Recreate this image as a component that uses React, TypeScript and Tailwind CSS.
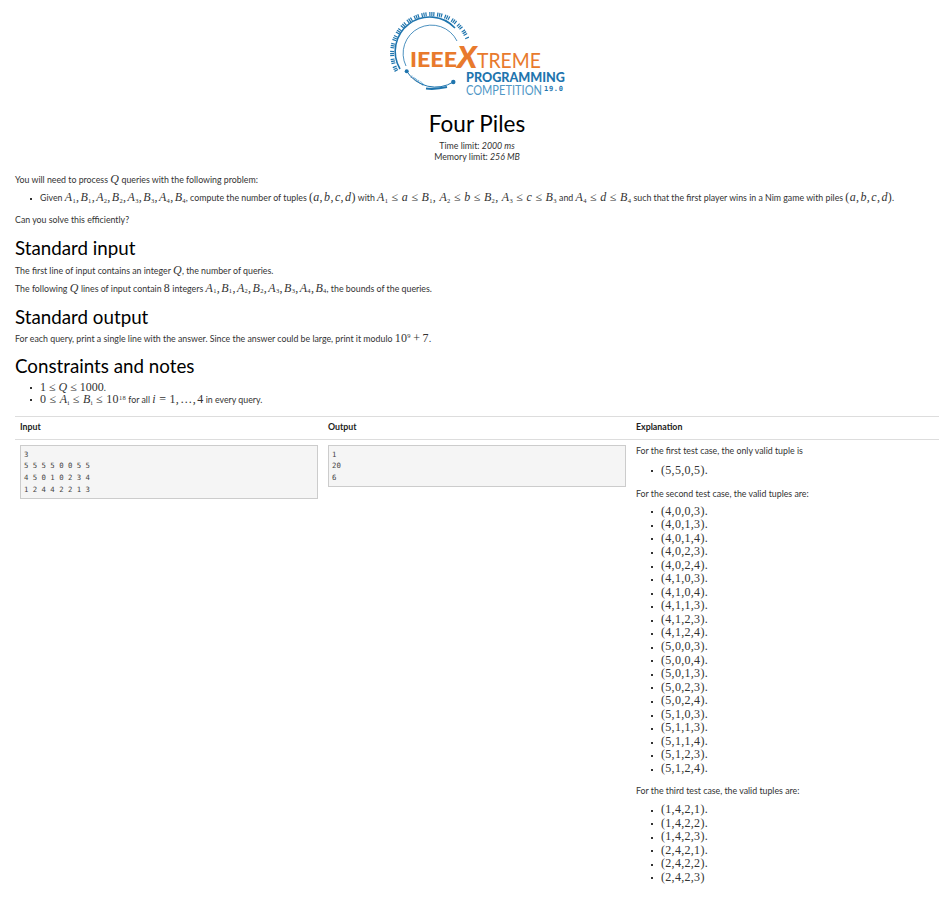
const serif = "font-['Liberation_Serif',serif]";

function Logo() {
  return (
    <svg width="190" height="92" viewBox="0 0 190 92" className="block">
      <g fill="none" stroke="#1f75ae">
        <path d="M16.5 63 A39 39 0 1 1 87.5 31" strokeWidth="4" strokeDasharray="1.2 0.8 1.2 0.8 1.2 2.6" />
        <path d="M20 61 A34.5 34.5 0 0 1 75 20" strokeWidth="1.6" />
        <path d="M26 58 A28 28 0 0 1 77 33" strokeWidth="0.8" />
        <path d="M26.7 63.3 A34 34 0 0 0 73.3 74" strokeWidth="1" />
        <path d="M46 80.5 Q56 81.5 67 79" strokeWidth="2.2" />
      </g>
      <circle cx="26.7" cy="63.3" r="2" fill="#1f75ae" />
      <circle cx="73.3" cy="74" r="2.2" fill="#1f75ae" />
      <text x="0" y="0" fill="#1f75ae" fontFamily="Lato" fontWeight="700" fontSize="3.2" transform="translate(30 69) rotate(35)">5 MAR ON</text>
      <text x="30" y="59" fill="#e87a2d" fontFamily="Lato" fontWeight="900" fontSize="21" textLength="47" lengthAdjust="spacingAndGlyphs">IEEE</text>
      <text x="77" y="60" fill="#e87a2d" fontFamily="Lato" fontWeight="900" fontStyle="italic" fontSize="30" textLength="20" lengthAdjust="spacingAndGlyphs">X</text>
      <text x="97" y="60" fill="#e87a2d" fontFamily="Lato" fontWeight="400" fontSize="22" textLength="64" lengthAdjust="spacingAndGlyphs">TREME</text>
      <text x="86" y="74" fill="#1f75ae" fontFamily="Lato" fontWeight="900" fontSize="12.5" textLength="99" lengthAdjust="spacingAndGlyphs">PROGRAMMING</text>
      <text x="86" y="87" fill="#4f97c6" fontFamily="Lato" fontWeight="400" fontSize="13.5" textLength="76" lengthAdjust="spacingAndGlyphs">COMPETITION</text>
      <text x="164" y="83" fill="#1f75ae" fontFamily="DejaVu Sans Mono" fontWeight="700" fontSize="7" textLength="19">19.0</text>
    </svg>
  );
}

function Sub({ v, n }: { v: string; n: string | number }) {
  return (
    <span className={serif}>
      <i>{v}</i>
      <sub className="text-[6.5px] leading-none">{n}</sub>
    </span>
  );
}

function M({ children }: { children: React.ReactNode }) {
  return <span className={`${serif} text-[12px] leading-none tracking-[0.3px]`}>{children}</span>;
}

function C() {
  return <span className="mr-[1.2px]">,</span>;
}

function Pairs() {
  return (
    <M>
      <Sub v="A" n={1} /><C /><Sub v="B" n={1} /><C /><Sub v="A" n={2} /><C /><Sub v="B" n={2} /><C /><Sub v="A" n={3} /><C /><Sub v="B" n={3} /><C /><Sub v="A" n={4} /><C /><Sub v="B" n={4} />
    </M>
  );
}

function Abcd() {
  return <M>(<i>a</i><C /><i>b</i><C /><i>c</i><C /><i>d</i>)</M>;
}

function Heading({ children }: { children: React.ReactNode }) {
  return <h2 className="text-[18.75px] leading-[24px] text-black">{children}</h2>;
}

function Bullet({ children, className = "" }: { children: React.ReactNode; className?: string }) {
  return (
    <li className={`relative ${className}`}>
      <span className="absolute -left-[10px] top-1/2 h-[2px] w-[2px] bg-[#333]" />
      {children}
    </li>
  );
}

const sampleInput = ["3", "5 5 5 5 0 0 5 5", "4 5 0 1 0 2 3 4", "1 2 4 4 2 2 1 3"];
const sampleOutput = ["1", "20", "6"];
const second = ["4,0,0,3", "4,0,1,3", "4,0,1,4", "4,0,2,3", "4,0,2,4", "4,1,0,3", "4,1,0,4", "4,1,1,3", "4,1,2,3", "4,1,2,4", "5,0,0,3", "5,0,0,4", "5,0,1,3", "5,0,2,3", "5,0,2,4", "5,1,0,3", "5,1,1,3", "5,1,1,4", "5,1,2,3", "5,1,2,4"];
const third = ["1,4,2,1", "1,4,2,2", "1,4,2,3", "2,4,2,1", "2,4,2,2", "2,4,2,3"];

function Tuples({ items, noEnd }: { items: string[]; noEnd?: boolean }) {
  return (
    <>
      {items.map((t, i) => (
        <Bullet key={t} className="h-[13.55px] leading-[13.55px]">
          <M>({t}){noEnd && i === items.length - 1 ? "" : "."}</M>
        </Bullet>
      ))}
    </>
  );
}

function CodeBox({ lines }: { lines: string[] }) {
  return (
    <pre className="border border-[#ccc] bg-[#f5f5f5] px-[3px] py-[2.5px] font-['DejaVu_Sans_Mono',monospace] text-[7.3px] leading-[11.7px] text-[#444]">
      {lines.join("\n")}
    </pre>
  );
}

export default function App() {
  return (
    <div className="min-h-[919px] bg-white pl-[15px] pr-[8px] font-['Lato',sans-serif] text-[8.8px] leading-[13px] text-[#333]">
      <header className="flex flex-col items-center pt-[8px]">
        <div className="-ml-[4px]">
          <Logo />
        </div>
        <h1 className="mt-[10px] text-[22.5px] leading-[28px] text-black">Four Piles</h1>
        <p className="mt-[1.5px] leading-[11px]">Time limit: <i>2000 ms</i></p>
        <p className="leading-[11px]">Memory limit: <i>256 MB</i></p>
      </header>

      <p className="mt-[11px] h-[13px]">You will need to process <M><i>Q</i></M> queries with the following problem:</p>
      <ul className="mt-[5.5px] list-none pl-[25px]">
        <Bullet className="h-[14px] whitespace-nowrap leading-[14px]">
          Given <Pairs />, compute the number of tuples <Abcd /> with <M><Sub v="A" n={1} /> ≤ <i>a</i> ≤ <Sub v="B" n={1} />, <Sub v="A" n={2} /> ≤ <i>b</i> ≤ <Sub v="B" n={2} />, <Sub v="A" n={3} /> ≤ <i>c</i> ≤ <Sub v="B" n={3} /></M> and <M><Sub v="A" n={4} /> ≤ <i>d</i> ≤ <Sub v="B" n={4} /></M> such that the first player wins in a Nim game with piles <Abcd />.
        </Bullet>
      </ul>
      <p className="mt-[7.5px] h-[13px]">Can you solve this efficiently?</p>

      <section className="mt-[10.5px]">
        <Heading>Standard input</Heading>
        <p className="mt-[3.5px] h-[13px]">The first line of input contains an integer <M><i>Q</i></M>, the number of queries.</p>
        <p className="mt-[5px] h-[13px]">The following <M><i>Q</i></M> lines of input contain <M>8</M> integers <Pairs />, the bounds of the queries.</p>
      </section>

      <section className="mt-[10.5px]">
        <Heading>Standard output</Heading>
        <p className="mt-[2.5px] h-[13px]">For each query, print a single line with the answer. Since the answer could be large, print it modulo <M>10<sup className="text-[6.5px] leading-none">9</sup><span className="mx-[-1px]"> + </span>7</M>.</p>
      </section>

      <section className="mt-[9.5px]">
        <Heading>Constraints and notes</Heading>
        <ul className="mt-[2.5px] list-none pl-[25px]">
          <Bullet className="h-[12.5px] leading-[12.5px]">
            <M><span className="tracking-normal">1 ≤ <i>Q</i> ≤ 1000</span></M>.
          </Bullet>
          <Bullet className="h-[12.5px] leading-[12.5px]">
            <M>0 ≤ <Sub v="A" n="i" /> ≤ <Sub v="B" n="i" /> ≤ 10<sup className="text-[6.5px] leading-none">18</sup></M> for all <M><i>i</i> = 1<C />…<C />4</M> in every query.
          </Bullet>
        </ul>
      </section>

      <div className="mt-[10.5px] grid grid-cols-3 border-t border-[#ddd]">
        <div className="col-span-3 grid grid-cols-3 border-b border-[#ddd] pb-[6px] pt-[4px] font-bold leading-[12px] text-[#222]">
          <div className="px-[5px]">Input</div>
          <div className="px-[5px]">Output</div>
          <div className="px-[5px]">Explanation</div>
        </div>
        <div className="px-[5px] pt-[5px]"><CodeBox lines={sampleInput} /></div>
        <div className="px-[5px] pt-[5px]"><CodeBox lines={sampleOutput} /></div>
        <div className="px-[5px] pt-[4px]">
          <p>For the first test case, the only valid tuple is</p>
          <ul className="mt-[6.5px] list-none pl-[25px]"><Tuples items={["5,5,0,5"]} /></ul>
          <p className="mt-[10px]">For the second test case, the valid tuples are:</p>
          <ul className="mt-[4.5px] list-none pl-[25px]"><Tuples items={second} /></ul>
          <p className="mt-[9px]">For the third test case, the valid tuples are:</p>
          <ul className="mt-[5.5px] list-none pl-[25px]"><Tuples items={third} noEnd /></ul>
        </div>
      </div>
    </div>
  );
}
